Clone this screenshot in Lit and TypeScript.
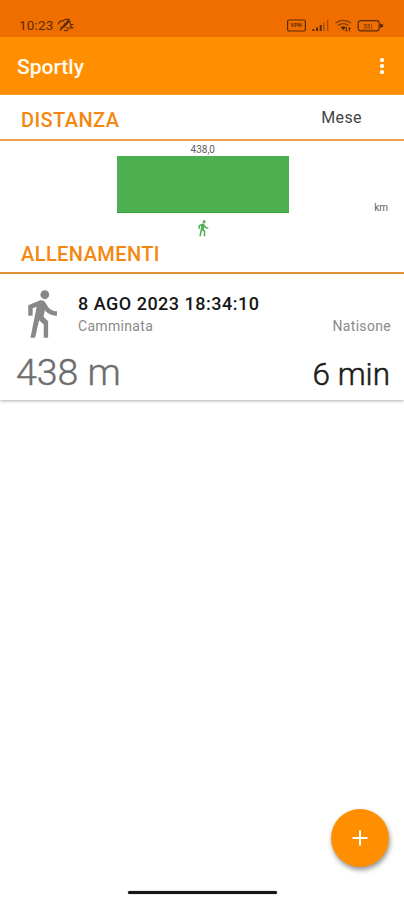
import { LitElement, html, css, svg } from "lit";
import { customElement, property } from "lit/decorators.js";

@customElement("walk-icon")
class WalkIcon extends LitElement {
  static styles = css`
    :host { display: block; }
    svg { display: block; width: 100%; height: 100%; fill: currentColor; }
  `;
  render() {
    return html`<svg viewBox="0 0 24 24">
      <path d="M13.5 5.5c1.1 0 2-.9 2-2s-.9-2-2-2-2 .9-2 2 .9 2 2 2zM9.8 8.9L7 23h2.1l1.8-8 2.1 2v6h2v-7.5l-2.1-2 .6-3C14.8 12 16.800 13 19 13v-2c-1.900 0-3.500-1-4.300-2.400l-1-1.600c-.4-.6-1-1-1.700-1-.3 0-.5.1-.8.1L6 8.300V13h2V9.600l1.800-.7"/>
    </svg>`;
  }
}

@customElement("status-bar")
class StatusBar extends LitElement {
  static styles = css`
    :host {
      display: flex; align-items: flex-start; box-sizing: border-box;
      height: 37px; padding: 17px 20px 0 19px; background: #f06e00; color: #5a2c05;
      font: 13.5px/17px Roboto, sans-serif;
    }
    .time { width: 38px; letter-spacing: 0.2px; white-space: nowrap; }
    .bell { width: 18px; height: 16px; }
    .icons { margin-left: auto; width: 98px; height: 16px; }
    svg { display: block; fill: none; stroke: currentColor; }
    .tiny { font-size: 5.5px; font-weight: 700; fill: currentColor; stroke: none; }
    .solid { fill: currentColor; stroke: none; }
  `;
  render() {
    const bars = [2, 3.5, 6, 8.5, 11];
    return html`
      <span class="time">10:23</span>
      <svg class="bell" viewBox="0 0 18 16" stroke-width="1.2">
        <path d="M1 7.500c1-2.500 3-3.800 5-3.500 1.500-2 4.500-2.500 6-.5M5 10.500c1.500-1 2-3 3.500-4.500M3 13.500L12.500 2M7 13.200c2 .8 3.500.6 4.500-.7M6.500 10.500l6-6.500c1.500 1.500.5 4 1.500 5.500l1.500 1.500H9M13.500 7.500h3M3 10.500h3"/>
      </svg>
      <svg class="icons" viewBox="0 0 98 16">
        <rect x="1.600" y="3" width="17.800" height="11" rx="1.500" stroke-width="1.200"/>
        <text class="tiny" x="4.600" y="10.300">VPN</text>
        ${bars.map((h, i) => svg`<rect class="solid" x=${26.3 + i * 3.7} y=${14 - h} width=${i < 3 ? 2 : 1.2} height=${h} opacity=${i < 3 ? 1 : 0.55}/>`)}
        <path d="M49.500 6c4.500-3.600 11-3.600 15.500 0M52 8.500c3-2.500 7.500-2.500 10.500 0" stroke-width="1.200" opacity=".75"/>
        <path d="M54.500 10.300c1.600-1.300 4-1.300 5.500 0l-2.700 2.900z" class="solid"/>
        <path d="M60.500 10v4M59.200 12.800l1.300 1.500 1.200-1.500M63.500 14.500v-4M62.200 12l1.300-1.500 1.200 1.500" stroke-width=".9"/>
        <rect x="72.200" y="3.600" width="21" height="10.200" rx="2.500" stroke-width="1.200"/>
        <path class="solid" d="M94 6.500l3.200 1.200v2L94 11z"/>
        <text class="tiny" x="77.500" y="10.900" opacity=".75">55</text>
        <path d="M76 12h11M85.500 6.500v5" stroke-width=".7" opacity=".6"/>
      </svg>
    `;
  }
}

@customElement("app-header")
class AppHeader extends LitElement {
  static styles = css`
    :host {
      display: flex; align-items: center; justify-content: space-between; box-sizing: border-box;
      height: 58px; padding: 0 20px 0 17px; background: #ff8f00; color: #fffaf0;
      border-bottom: 1px solid #fb9a2c;
      font: 500 21px/26px Roboto, sans-serif;
    }
    .title { padding-top: 3px; }
    .more { display: grid; gap: 2px; }
    .more i { width: 4px; height: 4px; border-radius: 1.5px; background: #fffaf0; }
  `;
  render() {
    return html`<span class="title">Sportly</span><span class="more"><i></i><i></i><i></i></span>`;
  }
}

@customElement("section-title")
class SectionTitle extends LitElement {
  @property() heading = "";
  static styles = css`
    :host {
      display: flex; justify-content: space-between; align-items: center; box-sizing: border-box;
      padding: 0 42px 0 21px; color: #f3870f; border-bottom: 2px solid #eda04a;
      font: 500 20px/24px Roboto, sans-serif; letter-spacing: 0.42px;
    }
  `;
  render() {
    return html`<span>${this.heading}</span><slot></slot>`;
  }
}

@customElement("workout-card")
class WorkoutCard extends LitElement {
  static styles = css`
    :host {
      display: block; box-sizing: border-box; height: 126px; padding: 13px 14px 0 15px;
      background: #fff; box-shadow: 0 1px 3px rgba(0, 0, 0, 0.32);
      font-family: Roboto, sans-serif; color: #8a8a8a;
    }
    .top { display: flex; height: 53px; }
    walk-icon { width: 53px; height: 53px; color: #888; }
    .info { flex: 1; padding: 5px 0 0 10px; }
    .date { font: 500 18px/24px Roboto, sans-serif; color: #161616; letter-spacing: 0.5px; white-space: nowrap; }
    .row { display: flex; justify-content: space-between; font-size: 14px; line-height: 20px; letter-spacing: 0.32px; }
    .row span:last-child { margin-right: -1px; }
    .values { display: flex; justify-content: space-between; align-items: baseline; padding: 10px 0 0 1px; }
    .distance { font-size: 37.5px; line-height: 44px; color: #6d6d6d; font-weight: 300; -webkit-text-stroke: 0.4px #6d6d6d; }
    .duration { font-size: 31.5px; line-height: 36px; color: #1b1b1b; font-weight: 300; -webkit-text-stroke: 0.5px #1b1b1b; }
  `;
  render() {
    return html`
      <div class="top">
        <walk-icon></walk-icon>
        <div class="info">
          <div class="date">8 AGO 2023 18:34:10</div>
          <div class="row"><span>Camminata</span><span>Natisone</span></div>
        </div>
      </div>
      <div class="values"><span class="distance">438 m</span><span class="duration">6 min</span></div>
    `;
  }
}

@customElement("app-root")
class AppRoot extends LitElement {
  static styles = css`
    :host {
      display: flex; flex-direction: column; position: relative; box-sizing: border-box;
      height: 900px; background: #fff; font-family: Roboto, sans-serif; overflow: hidden;
    }
    .distance { height: 46px; padding-top: 6px; }
    .period { font-size: 16px; font-weight: 400; color: #444; letter-spacing: 0.4px; margin-top: -5px; }
    .chart { display: grid; grid-template-columns: 117px 171.5px 1fr; height: 96px; }
    .plot { grid-column: 2; display: flex; flex-direction: column; align-items: center; }
    .value { font-size: 10px; line-height: 15px; padding-top: 1px; margin-bottom: -1px; color: #606060; }
    .bar { width: 100%; height: 57px; background: #4caf50; box-sizing: border-box; border-bottom: 1px solid #35a63b; }
    .plot walk-icon { width: 18px; height: 18px; margin-top: 6px; color: #4fae54; }
    .unit { padding: 61px 16px 0 0; text-align: right; font-size: 10px; line-height: 12px; color: #606060; }
    .workouts { height: 37px; padding-bottom: 1px; border-bottom-color: #e99532; }
    .fab {
      position: absolute; right: 15px; bottom: 33px; width: 58px; height: 58px; border-radius: 50%;
      display: grid; place-items: center; background: #ff8f00; box-shadow: 1px 3px 5px rgba(0, 0, 0, 0.42);
    }
    .fab svg { width: 16px; height: 16px; }
    .home { width: 149px; height: 3px; border-radius: 2px; background: #161616; margin: auto auto 6px; box-shadow: 0 0 1px #555; }
  `;
  render() {
    return html`
      <status-bar></status-bar>
      <app-header></app-header>
      <section-title class="distance" heading="DISTANZA"><span class="period">Mese</span></section-title>
      <div class="chart">
        <div class="plot">
          <span class="value">438,0</span>
          <div class="bar"></div>
          <walk-icon></walk-icon>
        </div>
        <span class="unit">km</span>
      </div>
      <section-title class="workouts" heading="ALLENAMENTI"></section-title>
      <workout-card></workout-card>
      <div class="home"></div>
      <div class="fab">
        <svg viewBox="0 0 16 16" stroke="#fff" stroke-width="2"><path d="M8 .5v15M.5 8h15"/></svg>
      </div>
    `;
  }
}
